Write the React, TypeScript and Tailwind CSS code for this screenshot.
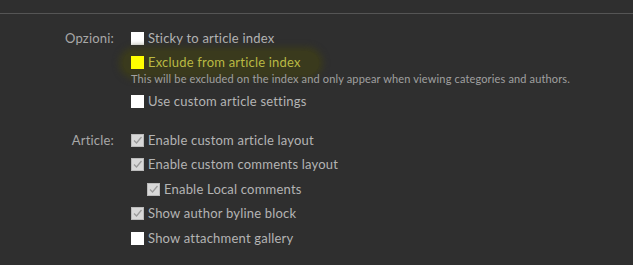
import React from 'react';

type Opt = { label: string; checked?: boolean; disabled?: boolean; indent?: boolean; highlight?: boolean; note?: string };

const opzioni: Opt[] = [
  { label: 'Sticky to article index' },
  { label: 'Exclude from article index', highlight: true, note: 'This will be excluded on the index and only appear when viewing categories and authors.' },
  { label: 'Use custom article settings' },
];

const article: Opt[] = [
  { label: 'Enable custom article layout', checked: true, disabled: true },
  { label: 'Enable custom comments layout', checked: true, disabled: true },
  { label: 'Enable Local comments', checked: true, disabled: true, indent: true },
  { label: 'Show author byline block', checked: true, disabled: true },
  { label: 'Show attachment gallery' },
];

function Box({ opt }: { opt: Opt }) {
  if (opt.highlight) return <span className="w-[13px] h-[13px] bg-[#ffff00] shrink-0" />;
  if (opt.checked) {
    return (
      <span className="w-[13px] h-[13px] bg-[#d8d8d8] border border-[#bbb] shrink-0 flex items-center justify-center">
        <svg width="11" height="11" viewBox="0 0 11 11">
          <path d="M2 5.5 L4.5 8 L9.5 2" fill="none" stroke="#9a9a9a" strokeWidth="1.3" />
        </svg>
      </span>
    );
  }
  return <span className="w-[13px] h-[13px] bg-white shrink-0" />;
}

function Row({ opt }: { opt: Opt }) {
  return (
    <div className={opt.indent ? 'pl-4' : ''}>
      <div className={'flex items-center gap-[4px] h-[24.5px] ' + (opt.highlight ? 'bg-[#3a3a1d] rounded-full -ml-2 pl-2 w-[196px] shadow-[0_0_6px_4px_#3a3a1d]' : '')}>
        <Box opt={opt} />
        <span className={'tracking-[0.2px] ' + (opt.highlight ? 'text-[#b9b943]' : 'text-[#b4b4b4]')}>{opt.label}</span>
      </div>
      {opt.note && <div className="text-[11px] tracking-[0.15px] text-[#a0a0a0] -mt-[3px] mb-[3.5px] leading-[14px]">{opt.note}</div>}
    </div>
  );
}

function Section({ title, opts }: { title: string; opts: Opt[] }) {
  return (
    <div className="flex">
      <div className="w-[114px] h-[24.5px] flex items-center justify-end text-[#a8a8a8] tracking-[0.2px]">{title}</div>
      <div className="pl-[17px] flex flex-col">
        {opts.map((o) => (
          <Row key={o.label} opt={o} />
        ))}
      </div>
    </div>
  );
}

export default function App() {
  return (
    <div className="w-[633px] h-[265px] bg-[#2f2f2f] text-[13px] font-['Lato','DejaVu_Sans',sans-serif] overflow-hidden">
      <div className="h-[13px]" />
      <div className="h-px bg-[#555]" />
      <div className="pt-[12px] flex flex-col gap-[14px]">
        <Section title="Opzioni:" opts={opzioni} />
        <Section title="Article:" opts={article} />
      </div>
    </div>
  );
}
